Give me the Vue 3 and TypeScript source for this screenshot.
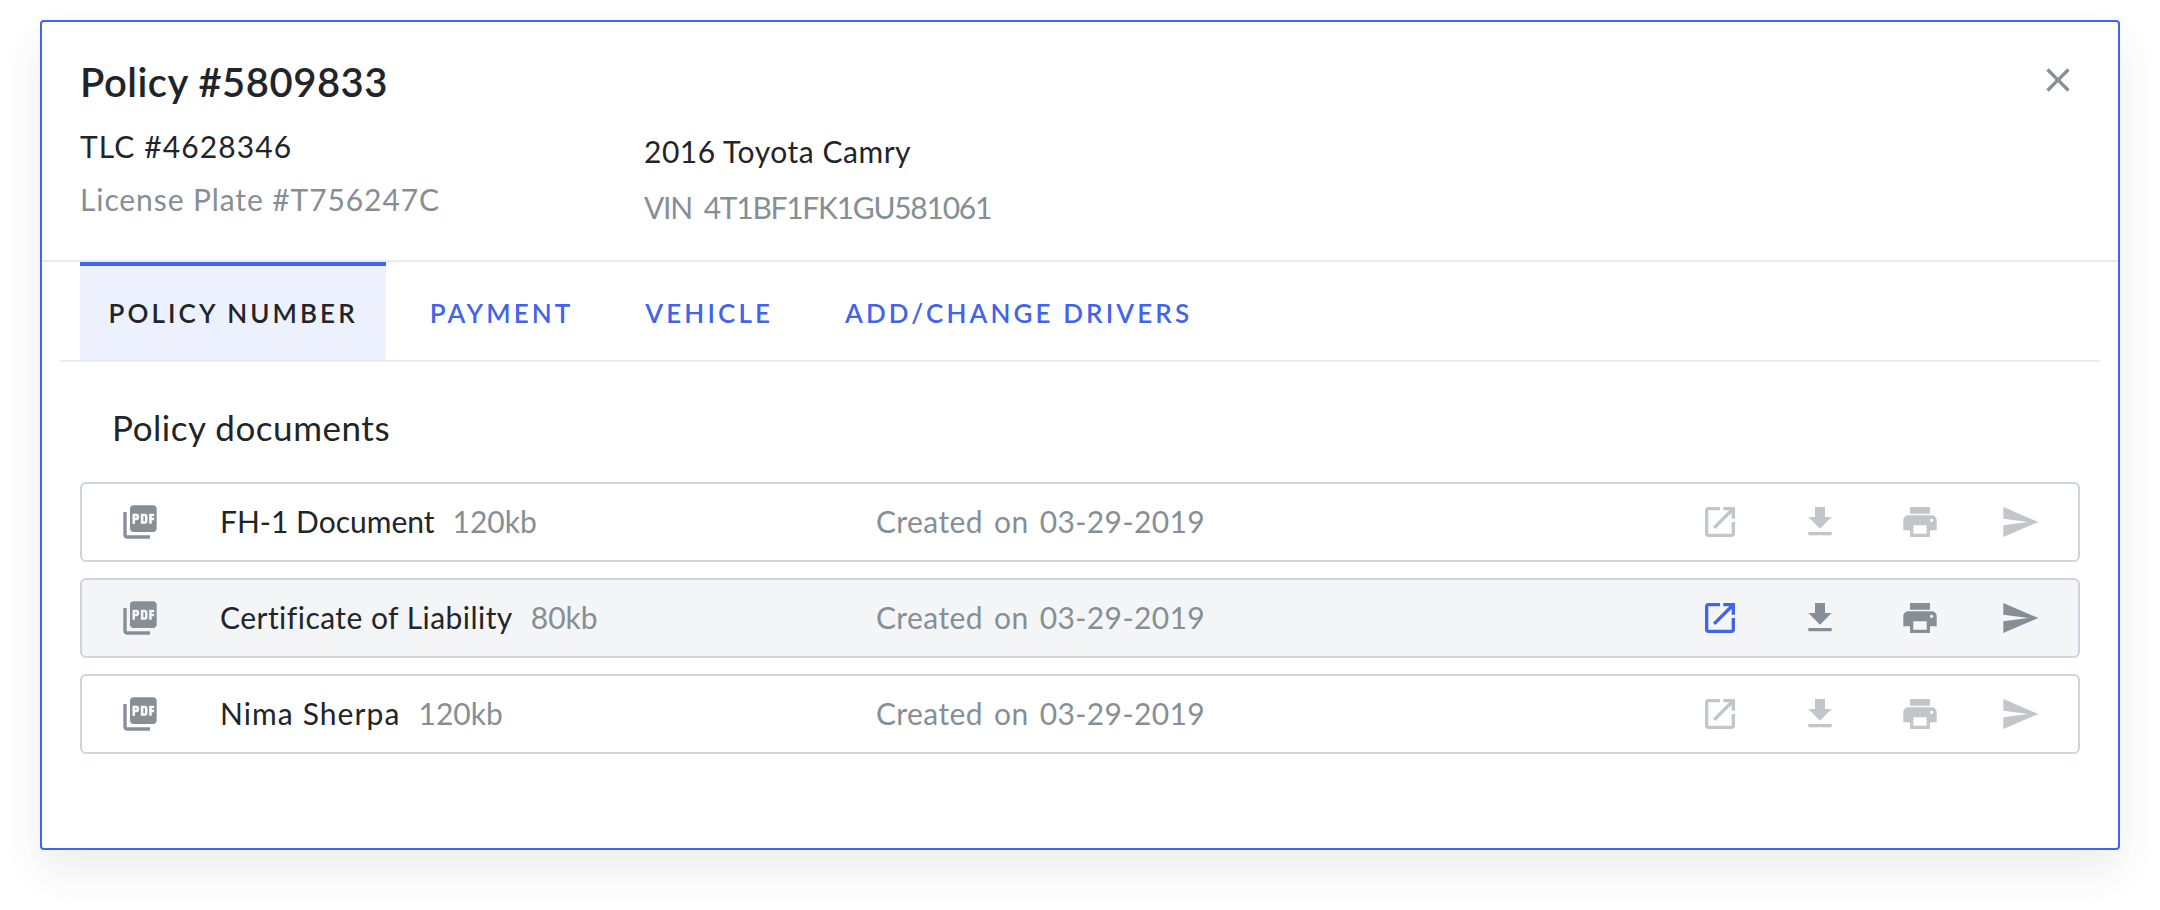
<script setup lang="ts">
interface Doc { name: string; size: string; date: string; fit: string; active?: boolean }
const docs: Doc[] = [
  { name: 'FH-1 Document', size: '120kb', date: 'Created on 03-29-2019', fit: 'fit-a' },
  { name: 'Certificate of Liability', size: '80kb', date: 'Created on 03-29-2019', fit: 'fit-b', active: true },
  { name: 'Nima Sherpa', size: '120kb', date: 'Created on 03-29-2019', fit: 'fit-c' },
]
const tabs = ['Policy Number', 'Payment', 'Vehicle', 'Add/Change Drivers']
</script>

<template>
  <div class="page">
    <div class="card">
      <header class="header">
        <h1 class="title">Policy #5809833</h1>
        <button class="close" aria-label="Close">
          <svg viewBox="0 0 24 24" width="40" height="40"><path d="M19 6.41 17.59 5 12 10.59 6.41 5 5 6.41 10.59 12 5 17.59 6.41 19 12 13.41 17.59 19 19 17.59 13.41 12z" /></svg>
        </button>
        <div class="meta">
          <div class="col col-left">
            <div class="dark tlc">TLC #4628346</div>
            <div class="muted plate">License Plate #T756247C</div>
          </div>
          <div class="col col-right">
            <div class="dark car">2016 Toyota Camry</div>
            <div class="muted vin">VIN 4T1BF1FK1GU581061</div>
          </div>
        </div>
      </header>

      <nav class="tabs">
        <div v-for="(t, i) in tabs" :key="t" class="tab" :class="{ on: i === 0 }">{{ t }}</div>
      </nav>

      <section class="body">
        <h2 class="heading">Policy documents</h2>
        <div class="list">
          <div v-for="d in docs" :key="d.name" class="row" :class="{ active: d.active }">
            <svg class="pdf" viewBox="0 0 24 24" width="40" height="40"><path d="M20 2H8c-1.1 0-2 .9-2 2v12c0 1.1.9 2 2 2h12c1.1 0 2-.9 2-2V4c0-1.1-.9-2-2-2zm-8.5 7.5c0 .83-.67 1.5-1.5 1.5H9v2H7.5V7H10c.83 0 1.5.67 1.5 1.5v1zm5 2c0 .83-.67 1.5-1.5 1.5h-2.5V7H15c.83 0 1.5.67 1.5 1.5v3zm4-3H19v1h1.5V11H19v2h-1.5V7h3v1.5zM9 9.5h1v-1H9v1zM4 6H2v14c0 1.1.9 2 2 2h14v-2H4V6zm10 5.5h1v-3h-1v3z" /></svg>
            <div class="name"><span class="doc" :class="d.fit">{{ d.name }}</span><span class="size">{{ d.size }}</span></div>
            <div class="date">{{ d.date }}</div>
            <div class="actions">
              <svg class="open" viewBox="0 0 24 24" width="40" height="40"><path d="M19 19H5V5h7V3H5c-1.11 0-2 .9-2 2v14c0 1.1.89 2 2 2h14c1.1 0 2-.9 2-2v-7h-2v7zM14 3v2h3.59l-9.83 9.83 1.41 1.41L19 6.41V10h2V3h-7z" /></svg>
              <svg viewBox="0 0 24 24" width="40" height="40"><path d="M19 9h-4V3H9v6H5l7 7 7-7zM5 18v2h14v-2H5z" /></svg>
              <svg viewBox="0 0 24 24" width="40" height="40"><path d="M19 8H5c-1.66 0-3 1.34-3 3v6h4v4h12v-4h4v-6c0-1.66-1.34-3-3-3zm-3 11H8v-5h8v5zm3-7c-.55 0-1-.45-1-1s.45-1 1-1 1 .45 1 1-.45 1-1 1zm-1-9H6v4h12V3z" /></svg>
              <svg viewBox="0 0 24 24" width="40" height="40"><path d="M2.01 21 23 12 2.01 3 2 10l15 2-15 2z" /></svg>
            </div>
          </div>
        </div>
      </section>
    </div>
  </div>
</template>

<style scoped>
.page {
  box-sizing: border-box;
  height: 910px;
  padding: 20px 40px 0;
  overflow: hidden;
}
.card {
  box-sizing: border-box;
  height: 830px;
  background: #fff;
  border: 2px solid #4263eb;
  border-radius: 4px;
  box-shadow: 0 20px 40px rgba(52, 58, 64, 0.09);
  font-family: Lato, "Liberation Sans", sans-serif;
  color: #212529;
}
.header {
  position: relative;
  box-sizing: border-box;
  height: 240px;
  padding: 36px 38px 0;
  border-bottom: 2px solid #e9ecef;
}
.title {
  margin: 0;
  font-size: 40px;
  font-weight: 600;
  letter-spacing: 0.5px;
  line-height: 48px;
}
.close {
  position: absolute;
  top: 38px;
  right: 40px;
  width: 40px;
  height: 40px;
  padding: 0;
  border: 0;
  background: none;
  fill: #868e96;
}
.meta { display: flex; }
.col { font-size: 30px; line-height: 40px; }
.col-left { width: 564px; margin-top: 20px; display: flex; flex-direction: column; gap: 13px; }
.col-right { margin-top: 25px; display: flex; flex-direction: column; gap: 16px; }
.tlc { letter-spacing: 1.1px; }
.plate { letter-spacing: 0.9px; }
.car { letter-spacing: 0.53px; }
.vin { letter-spacing: -1.27px; word-spacing: 5.5px; }
.muted { color: #868e96; }
.tabs {
  display: flex;
  gap: 15px;
  height: 98px;
  margin: 0 18px;
  padding-left: 20px;
  border-bottom: 2px solid #e9ecef;
}
.tab {
  box-sizing: border-box;
  height: 98px;
  padding: 0 28.5px;
  display: flex;
  align-items: center;
  border-top: 4px solid transparent;
  font-size: 26px;
  font-weight: 600;
  letter-spacing: 3.1px;
  text-transform: uppercase;
  color: #4263eb;
}
.tab.on {
  background: #edf1fd;
  border-top-color: #4263eb;
  color: #212529;
}
.body { padding: 45px 38px 0; }
.heading {
  margin: 0 0 35px 32px;
  font-size: 35px;
  font-weight: 400;
  letter-spacing: 0.55px;
  line-height: 40px;
}
.list { display: flex; flex-direction: column; gap: 16px; }
.row {
  box-sizing: border-box;
  height: 80px;
  display: flex;
  align-items: center;
  padding: 0 38px;
  border: 2px solid #ced4da;
  border-radius: 6px;
  font-size: 30px;
}
.row.active { background: #f4f5f7; }
.pdf { fill: #868e96; flex: none; }
.name { width: 656px; margin-left: 60px; flex: none; padding-bottom: 2px; }
.doc { margin-right: 18px; }
.fit-b { letter-spacing: 0.46px; }
.fit-c { letter-spacing: 1.1px; }
.size, .date { color: #868e96; }
.date { letter-spacing: 0.4px; word-spacing: 3px; padding-bottom: 2px; }
.actions { margin-left: auto; display: flex; gap: 60px; fill: #868e96; opacity: 0.5; }
.row.active .actions { opacity: 1; }
.row.active .open { fill: #4263eb; }
</style>

<style>
html, body { background: #fff; }
</style>
